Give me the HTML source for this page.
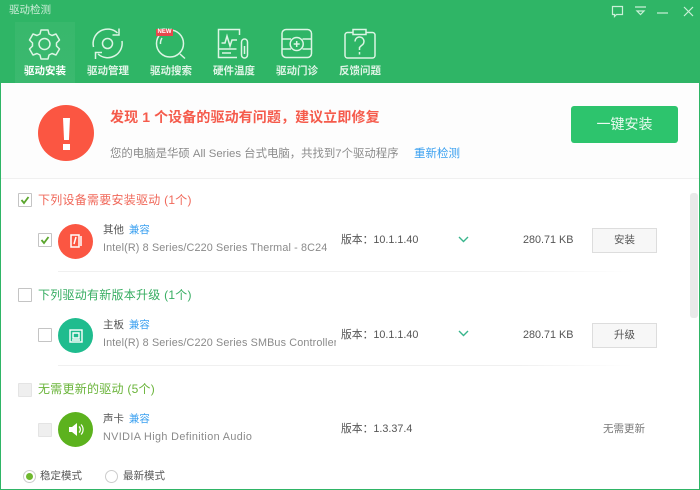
<!DOCTYPE html>
<html lang="zh"><head><meta charset="utf-8"><title>驱动检测</title>
<style>
*{margin:0;padding:0;box-sizing:border-box}
html,body{width:700px;height:490px;overflow:hidden;background:#fff}
body{position:relative;font-family:"Liberation Sans","Noto Sans CJK SC",sans-serif;font-size:10.5px;color:#666}
.a{position:absolute;white-space:nowrap;line-height:14px}
svg{position:absolute;overflow:visible}
.tab{position:absolute;top:64px;font-size:10.5px;color:#dff4e6;width:60px;text-align:center;line-height:14px;font-weight:bold}
.cb{position:absolute;width:14px;height:14px;border:1px solid #c4c4c4;background:#fff;border-radius:1px}
.off{background:#efefef;border-color:#e4e4e4}
.cir{position:absolute;width:35px;height:35px;border-radius:50%}
.btn{position:absolute;left:592px;width:65px;height:25px;border:1px solid #ddd;background:#f7f7f7;text-align:center;line-height:23px;color:#555;font-size:10.5px}
.blue{color:#3aa0f0;margin-left:2px}
.g{color:#8a8a8a;font-size:10.8px;letter-spacing:.14px}
.k{color:#555}
.ver{color:#555;font-size:10.8px}
.ver b{font-weight:normal;font-family:"Liberation Sans","Noto Sans CJK TC",sans-serif}
.h{font-size:12px;letter-spacing:.25px}
.sep{position:absolute;left:58px;width:575px;height:1px;background:linear-gradient(90deg,#f0f0f0 80%,#fff)}
</style></head><body>
<div class="a" style="left:0;top:0;width:700px;height:83px;background:#2fb566"></div>
<div class="a" style="left:15px;top:22px;width:60px;height:61px;background:linear-gradient(#38b86c,#3bb96f)"></div>
<div class="a" style="left:0;top:83px;width:1px;height:407px;background:#2fb566"></div>
<div class="a" style="left:699px;top:83px;width:1px;height:407px;background:#2fb566"></div>
<div class="a" style="left:0;top:489px;width:700px;height:1px;background:#2fb566"></div>
<div class="a" style="left:9px;top:3px;color:#cfeeda;font-size:10.5px">驱动检测</div>

<svg style="left:0;top:0" width="700" height="83" fill="none" stroke="#dcf5e4" stroke-width="1.500">
<!-- gear -->
<path d="M41 30h7l1 4 3 1.500 4-1.500 3.500 6-3 3v3l3 3-3.500 6-4-1.500-3 1.500-1 4h-7l-1-4-3-1.500-4 1.500-3.500-6 3-3v-3l-3-3 3.500-6 4 1.500 3-1.500z" stroke-linejoin="round"/>
<circle cx="44.500" cy="44" r="5.500"/>
<!-- manage -->
<path d="M93.500 47A14.500 14.500 0 0 1 117.500 33M122 41A14.500 14.500 0 0 1 98 54"/>
<path d="M119 28.500V35h-6.500M95.500 59v-6.500h6.500"/>
<circle cx="107.500" cy="43.500" r="5"/>
<!-- search -->
<circle cx="170" cy="43.500" r="13.500"/>
<path d="M160.500 44a9.500 9.500 0 0 1 1.500-6M180 54l5 4.500"/>
<!-- hardware -->
<path d="M239.500 35V29.500H218.500V57.500H237"/><path d="M218.500 49h18M222 53h9M222 43l-.5 0h3.500l2-7 3 10 2-6h5"/>
<path d="M241.500 42a3 3 0 0 1 6 0v13a3 3 0 0 1-6 0zM244.500 46v8"/>
<!-- clinic -->
<rect x="282" y="29.500" width="29.500" height="28" rx="4"/><circle cx="296.700" cy="44" r="6.500"/>
<path d="M282 39h9M311.500 39h-9M282 49h9M311.500 49h-9M296.700 41v6M293.700 44h6"/>
<!-- feedback -->
<path d="M353 32.500h-5.500a2.500 2.500 0 0 0-2.500 2.500v20.500a2.500 2.500 0 0 0 2.500 2.500h25a2.500 2.500 0 0 0 2.500-2.500V35a2.500 2.500 0 0 0-2.500-2.500H366"/>
<rect x="353" y="29.500" width="13" height="5"/>
<path d="M355 41.500a4.500 4.500 0 1 1 6.500 4l-2 2v2.500M359.500 52v2.500"/>
<!-- window controls -->
<path d="M612.500 6.500h10v8h-6l-2 2v-2h-2z" stroke-width="1.200" stroke="#cbf0d8"/>
<path d="M635 7h11M637 11h7l-3.500 3.500z" stroke-width="1.200" stroke="#cbf0d8"/>
<path d="M657 13h11" stroke-width="1.200" stroke="#cbf0d8"/>
<path d="M684 7l9 9M693 7l-9 9" stroke-width="1.200" stroke="#cbf0d8"/>
</svg>
<div class="a" style="left:156px;top:29px;width:17px;height:7px;background:#e8474c;color:#fff;font-size:6px;line-height:7px;text-align:center;font-weight:bold">NEW</div>
<div class="tab" style="left:15px;color:#fff">驱动安装</div>
<div class="tab" style="left:78px">驱动管理</div>
<div class="tab" style="left:141px">驱动搜索</div>
<div class="tab" style="left:204px">硬件温度</div>
<div class="tab" style="left:267px">驱动门诊</div>
<div class="tab" style="left:330px">反馈问题</div>

<!-- summary -->
<div class="a" style="left:1px;top:83px;width:698px;height:96px;background:#fdfdfd;border-bottom:1px solid #f0f0f0"></div>
<div class="a" style="left:38px;top:105px;width:56px;height:56px;border-radius:50%;background:#fb5642"></div>
<div class="a" style="left:63px;top:118px;width:7px;height:22px;background:#fff;clip-path:polygon(0 0,100% 0,85% 100%,15% 100%)"></div>
<div class="a" style="left:63px;top:144px;width:7px;height:6px;background:#fff"></div>
<div class="a" style="left:110px;top:108px;font-size:14px;line-height:18px;color:#f55b4c;font-weight:bold;letter-spacing:.1px">发现 1 个设备的驱动有问题，建议立即修复</div>
<div class="a" style="left:110px;top:147px;color:#8c8c8c;font-size:11.400px">您的电脑是华硕 All Series 台式电脑，共找到7个驱动程序</div>
<div class="a" style="left:414px;top:147px;font-size:11.500px;color:#3aa0f0">重新检测</div>
<div class="a" style="left:571px;top:106px;width:107px;height:37px;border-radius:3px;background:#2dc46d;color:#eafaf0;font-size:14px;line-height:37px;text-align:center">一键安装</div>

<!-- scrollbar -->
<div class="a" style="left:690px;top:193px;width:8px;height:125px;background:#e9e9e9;border-radius:3px"></div>

<!-- group 1 -->
<div class="cb" style="left:18px;top:193px"></div>
<svg style="left:18px;top:193px" width="14" height="14" fill="none" stroke="#5aa52c" stroke-width="1.800"><path d="M3.500 7l2.500 3L10.500 4"/></svg>
<div class="a h" style="left:38px;top:193px;color:#f0685a">下列设备需要安装驱动 (1个)</div>
<div class="cb" style="left:38px;top:233px"></div>
<svg style="left:38px;top:233px" width="14" height="14" fill="none" stroke="#5aa52c" stroke-width="1.800"><path d="M3.500 7l2.500 3L10.500 4"/></svg>
<div class="cir" style="left:58px;top:224px;background:#fb5642"></div>
<svg style="left:70px;top:234px" width="13" height="14" fill="none" stroke="#fff" stroke-width="1.500"><path d="M1 1h8v12H1zM6 3L4 10M11 2v10" /></svg>
<div class="a k" style="left:103px;top:223px">其他 <span class="blue">兼容</span></div>
<div class="a g" style="left:103px;top:241px">Intel(R) 8 Series/C220 Series Thermal - 8C24</div>
<div class="a ver" style="left:341px;top:233px">版本<b>：</b>10.1.1.40</div>
<svg style="left:458px;top:236px" width="11" height="8" fill="none" stroke="#38b58c" stroke-width="1.400"><path d="M1 1l4.500 4.500L10 1"/></svg>
<div class="a k" style="left:523px;top:233px;font-size:10.800px">280.71 KB</div>
<div class="btn" style="top:228px">安装</div>
<div class="sep" style="top:271px"></div>

<!-- group 2 -->
<div class="cb" style="left:18px;top:288px"></div>
<div class="a h" style="left:38px;top:288px;color:#37ad62">下列驱动有新版本升级 (1个)</div>
<div class="cb" style="left:38px;top:328px"></div>
<div class="cir" style="left:58px;top:318px;background:#1fbc8e"></div>
<svg style="left:69px;top:329px" width="14" height="14" fill="none" stroke="#fff" stroke-width="1.400"><rect x="1" y="1" width="12" height="12"/><path d="M4 4h6v5H4zM3 11h8"/></svg>
<div class="a k" style="left:103px;top:318px">主板 <span class="blue">兼容</span></div>
<div class="a g" style="left:103px;top:336px;width:233px;overflow:hidden">Intel(R) 8 Series/C220 Series SMBus Controller</div>
<div class="a ver" style="left:341px;top:328px">版本<b>：</b>10.1.1.40</div>
<svg style="left:458px;top:330px" width="11" height="8" fill="none" stroke="#38b58c" stroke-width="1.400"><path d="M1 1l4.500 4.500L10 1"/></svg>
<div class="a k" style="left:523px;top:328px;font-size:10.800px">280.71 KB</div>
<div class="btn" style="top:323px">升级</div>
<div class="sep" style="top:365px"></div>

<!-- group 3 -->
<div class="cb off" style="left:18px;top:383px"></div>
<div class="a h" style="left:38px;top:382px;color:#6ab43a">无需更新的驱动 (5个)</div>
<div class="cb off" style="left:38px;top:423px"></div>
<div class="cir" style="left:58px;top:412px;background:#5cb21e"></div>
<svg style="left:69px;top:422px" width="16" height="15"><path d="M0 5h3l5-4v13l-5-4H0z" fill="#fff"/><path d="M10 4.500a4 4 0 0 1 0 6M12 2.500a7 7 0 0 1 0 10" fill="none" stroke="#fff" stroke-width="1.200"/></svg>
<div class="a k" style="left:103px;top:412px">声卡 <span class="blue">兼容</span></div>
<div class="a g" style="left:103px;top:430px;letter-spacing:.38px">NVIDIA High Definition Audio</div>
<div class="a ver" style="left:341px;top:422px">版本<b>：</b>1.3.37.4</div>
<div class="a" style="left:603px;top:422px;color:#777">无需更新</div>

<!-- footer -->
<div class="a" style="left:23px;top:470px;width:13px;height:13px;border-radius:50%;border:1px solid #ccc;background:#fff"></div>
<div class="a" style="left:26px;top:473px;width:7px;height:7px;border-radius:50%;background:#6fb82f"></div>
<div class="a k" style="left:40px;top:469px">稳定模式</div>
<div class="a" style="left:105px;top:470px;width:13px;height:13px;border-radius:50%;border:1px solid #ccc;background:#fff"></div>
<div class="a k" style="left:123px;top:469px">最新模式</div>
</body></html>
